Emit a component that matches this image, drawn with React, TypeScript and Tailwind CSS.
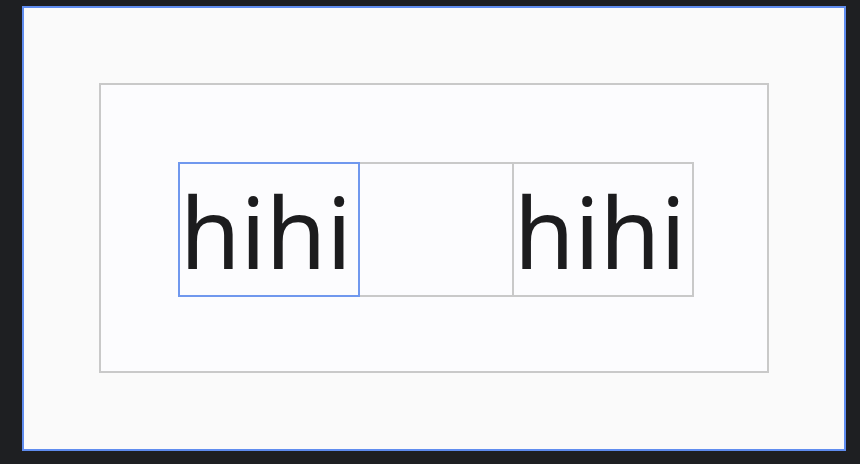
export default function App() {
  return (
    <div className="w-[860px] h-[464px] bg-[#1e1f22] pt-[6px] pl-[22px]">
      <div className="w-[824px] h-[445px] border-2 border-[#5f8cef] bg-[#fafafa] pt-[75px] pl-[75px]">
        <div className="w-[670px] h-[290px] border-2 border-[#c9c9c9] bg-[#fcfcfe] pt-[77px] pl-[77px]">
          <div className="flex h-[135px] font-['Noto_Sans',sans-serif] text-[#1c1c1e] text-[98px] leading-[134px]">
            <div className="w-[182px] border-2 border-[#7098ee] pl-[0px]">
              hihi
            </div>
            <div className="w-[152px] border-y-2 border-[#c9c9c9]" />
            <div className="w-[182px] border-2 border-[#c9c9c9]">
              hihi
            </div>
          </div>
        </div>
      </div>
    </div>
  );
}
